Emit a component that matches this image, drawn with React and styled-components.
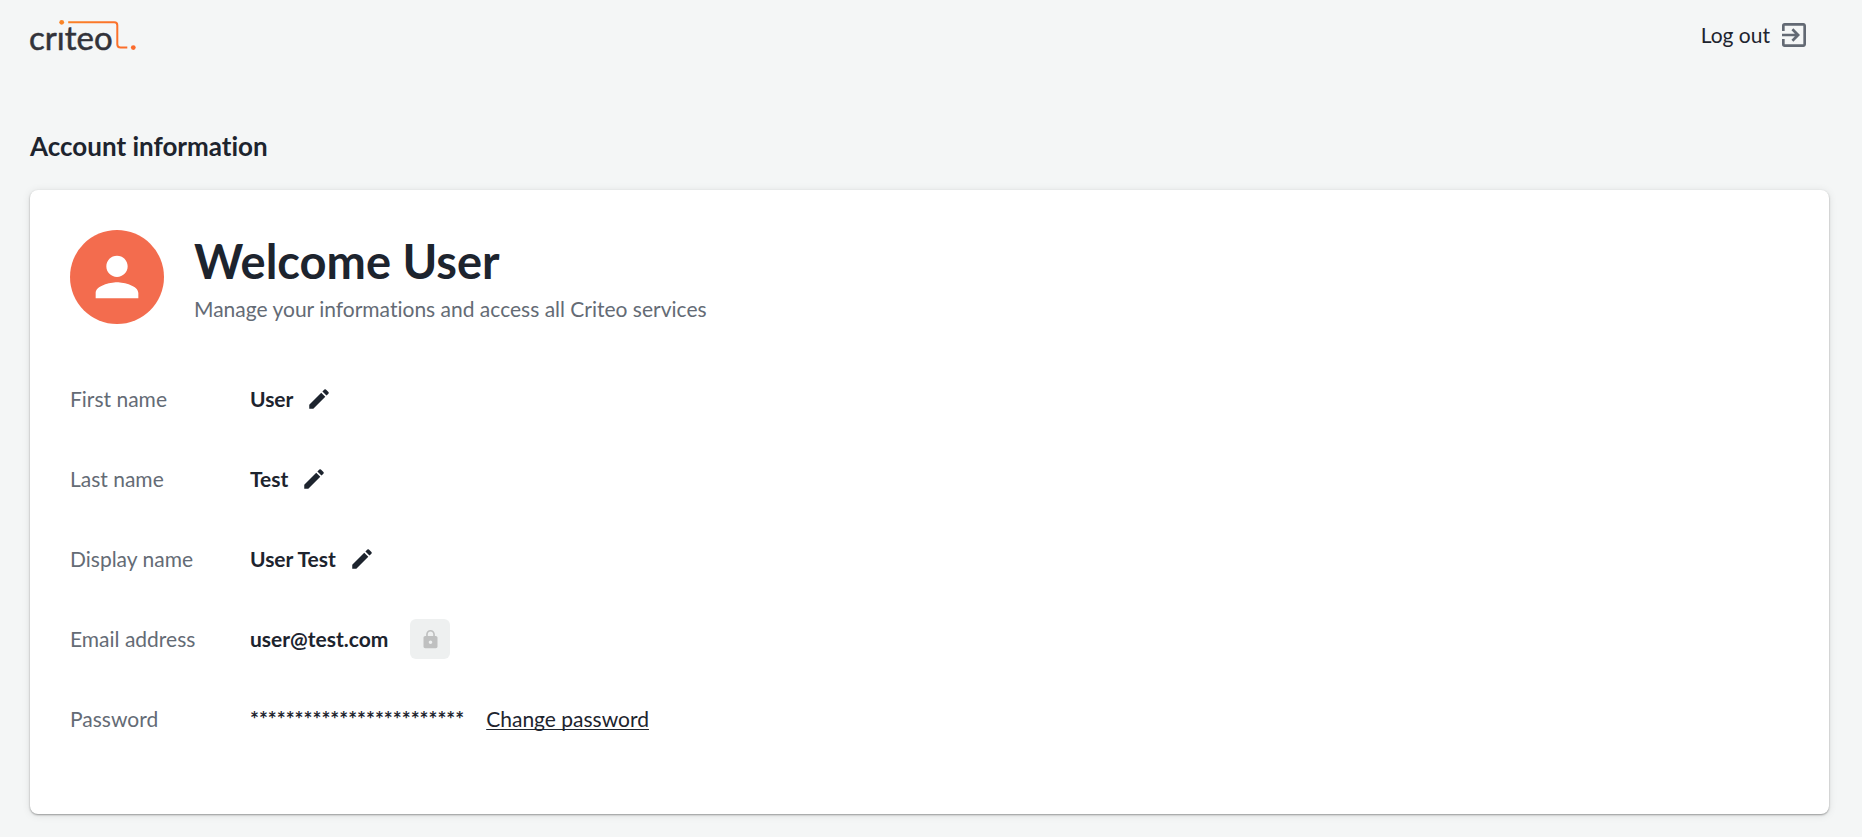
import React from 'react';
import styled, { createGlobalStyle } from 'styled-components';
import { MdEdit, MdExitToApp, MdLock, MdPerson } from 'react-icons/md';

const GlobalStyle = createGlobalStyle`
  *, *::before, *::after { box-sizing: border-box; }
  body {
    margin: 0;
    background: #f4f6f6;
    color: #1d242e;
    font-family: Lato, "Open Sans", sans-serif;
    font-size: 21px;
    line-height: 28px;
    font-variant-ligatures: none;
  }
`;

const Header = styled.header`
  display: flex;
  align-items: center;
  justify-content: space-between;
  height: 70px;
  padding: 0 52px 0 28px;
`;

const HomeLink = styled.a`
  display: flex;
  color: #32333a;
`;

const LogoutButton = styled.button`
  display: flex;
  align-items: center;
  gap: 8px;
  padding: 0;
  border: 0;
  background: none;
  color: inherit;
  font: inherit;
  cursor: pointer;

  svg { color: #626973; }
`;

const Main = styled.main`
  padding: 60px 33px 22px 30px;
`;

const SectionTitle = styled.h2`
  margin: 0 0 28px;
  font-size: 26px;
  line-height: 32px;
  font-weight: 700;
`;

const Card = styled.section`
  padding: 40px 40px 55px;
  border-radius: 8px;
  background: #fff;
  box-shadow: 0 1px 2px rgba(0, 0, 0, 0.35), 0 1px 8px rgba(0, 0, 0, 0.1);
`;

const Profile = styled.div`
  display: flex;
  align-items: center;
  gap: 30px;
  margin-bottom: 35px;
`;

const Avatar = styled.div`
  display: flex;
  align-items: center;
  justify-content: center;
  flex: none;
  width: 94px;
  height: 94px;
  border-radius: 50%;
  background: #f36c4e;
  color: #fff;
`;

const Greeting = styled.h1`
  margin: 0;
  font-size: 47px;
  line-height: 60px;
  font-weight: 700;
`;

const Subtitle = styled.p`
  margin: 4px 0 0;
  color: #646b75;
`;

const Fields = styled.dl`
  margin: 0;
`;

const Field = styled.div`
  display: flex;
  align-items: center;
  height: 80px;
`;

const FieldName = styled.dt`
  flex: none;
  width: 180px;
  color: #646b75;
`;

const FieldValue = styled.dd`
  display: flex;
  align-items: center;
  gap: ${({ $gap }) => $gap}px;
  margin: 0;
  font-weight: 700;
`;

const EditButton = styled.button`
  display: flex;
  padding: 0;
  border: 0;
  background: none;
  color: #1d242e;
  cursor: pointer;
`;

const LockButton = styled.button`
  display: flex;
  align-items: center;
  justify-content: center;
  width: 40px;
  height: 40px;
  padding: 0;
  border: 0;
  border-radius: 6px;
  background: #eef0f0;
  color: #bfc0c0;
`;

const TextLink = styled.a`
  color: inherit;
  font-weight: 400;
  text-decoration: underline;
  text-decoration-thickness: 1px;
  text-underline-offset: 2px;
  text-decoration-skip-ink: none;
`;

const LogoSvg = styled.svg`
  display: block;
  overflow: visible;
`;

const Wordmark = styled.text`
  font-family: Lato, sans-serif;
  font-size: 33px;
  fill: currentColor;
  stroke: currentColor;
  stroke-width: 0.5;
`;

function Logo() {
  return (
    <LogoSvg width="112" height="40" viewBox="-2 -2 112 40" role="img" aria-label="criteo">
      <defs>
        <linearGradient id="trail" gradientUnits="userSpaceOnUse" x1="30" y1="0" x2="106" y2="0">
          <stop offset="0" stopColor="#fa8526" />
          <stop offset="1" stopColor="#fb6a2c" />
        </linearGradient>
      </defs>
      <Wordmark x="-1" y="33">crıteo</Wordmark>
      <circle cx="31.7" cy="5.3" r="2.4" fill="url(#trail)" />
      <path
        d="M38.2 5.3H84.3Q87.3 5.3 87.3 8.3V27.3Q87.3 30.5 90.5 30.5H97.3"
        fill="none"
        stroke="url(#trail)"
        strokeWidth="2"
      />
      <circle cx="103.3" cy="30.6" r="2.4" fill="url(#trail)" />
    </LogoSvg>
  );
}

function EditableField({ name, value }) {
  return (
    <Field>
      <FieldName>{name}</FieldName>
      <FieldValue $gap={13}>
        {value}
        <EditButton type="button" aria-label={`Edit ${name.toLowerCase()}`}>
          <MdEdit size={26} />
        </EditButton>
      </FieldValue>
    </Field>
  );
}

export default function App() {
  return (
    <>
      <GlobalStyle />
      <Header>
        <HomeLink href="#home"><Logo /></HomeLink>
        <LogoutButton type="button">
          Log out
          <MdExitToApp size={32} />
        </LogoutButton>
      </Header>
      <Main>
        <SectionTitle>Account information</SectionTitle>
        <Card>
          <Profile>
            <Avatar><MdPerson size={64} /></Avatar>
            <div>
              <Greeting>Welcome User</Greeting>
              <Subtitle>Manage your informations and access all Criteo services</Subtitle>
            </div>
          </Profile>
          <Fields>
            <EditableField name="First name" value="User" />
            <EditableField name="Last name" value="Test" />
            <EditableField name="Display name" value="User Test" />
            <Field>
              <FieldName>Email address</FieldName>
              <FieldValue $gap={22}>
                user@test.com
                <LockButton type="button" disabled aria-label="Email address is locked">
                  <MdLock size={21} />
                </LockButton>
              </FieldValue>
            </Field>
            <Field>
              <FieldName>Password</FieldName>
              <FieldValue $gap={22}>
                ************************
                <TextLink href="#password">Change password</TextLink>
              </FieldValue>
            </Field>
          </Fields>
        </Card>
      </Main>
    </>
  );
}
